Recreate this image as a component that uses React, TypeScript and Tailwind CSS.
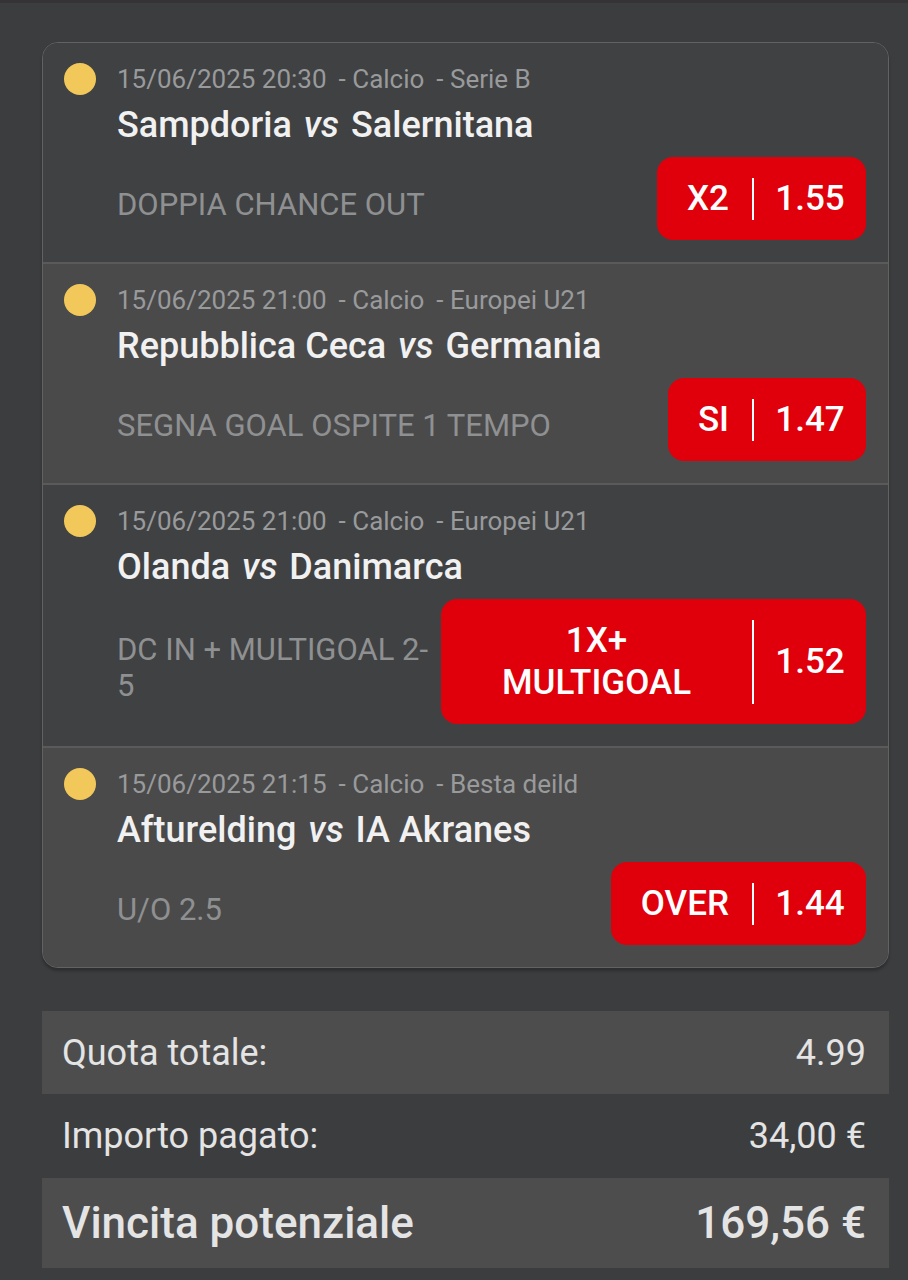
import React from "react";

type Bet = {
  date: string;
  sport: string;
  league: string;
  home: string;
  away: string;
  market: string;
  pick: string;
  odds: string;
  light?: boolean;
  wide?: boolean;
};

const bets: Bet[] = [
  { date: "15/06/2025 20:30", sport: "Calcio", league: "Serie B", home: "Sampdoria", away: "Salernitana", market: "DOPPIA CHANCE OUT", pick: "X2", odds: "1.55" },
  { date: "15/06/2025 21:00", sport: "Calcio", league: "Europei U21", home: "Repubblica Ceca", away: "Germania", market: "SEGNA GOAL OSPITE 1 TEMPO", pick: "SI", odds: "1.47", light: true },
  { date: "15/06/2025 21:00", sport: "Calcio", league: "Europei U21", home: "Olanda", away: "Danimarca", market: "DC IN + MULTIGOAL 2-5", pick: "1X+ MULTIGOAL", odds: "1.52", wide: true },
  { date: "15/06/2025 21:15", sport: "Calcio", league: "Besta deild", home: "Afturelding", away: "IA Akranes", market: "U/O 2.5", pick: "OVER", odds: "1.44", light: true },
];

function BetRow({ bet, last }: { bet: Bet; last: boolean }) {
  return (
    <div
      className={`flex pl-[21px] pr-[22px] pt-5 pb-[22px] ${bet.light ? "bg-[#4a4a4b]" : "bg-[#404143]"} ${last ? "" : "border-b-2 border-[#5a5a5b]"}`}
    >
      {/* status dot */}
      <div className="flex h-8 w-[53px] shrink-0 items-center">
        <span className="h-8 w-8 rounded-full bg-[#f2c85b]" />
      </div>
      <div className="min-w-0 flex-1">
        <p className="text-[26px] leading-8 text-[#999a9b]">
          {bet.date}
          <span className="ml-3">- {bet.sport}</span>
          <span className="ml-3">- {bet.league}</span>
        </p>
        <p className="mt-[10px] text-[36px] font-medium leading-10 text-[#f1f1f1]">
          {bet.home} <i className="mx-[3px]">vs</i> {bet.away}
        </p>
        <div className="mt-3 flex items-center gap-2">
          <p className="min-w-0 flex-1 pt-3 text-[31px] leading-9 text-[#8f9091]">{bet.market}</p>
          {bet.wide ? (
            <div className="flex w-[425px] shrink-0 rounded-2xl bg-[#e0000b] py-[20.5px] text-[35px] font-medium leading-[42px] text-white">
              <span className="flex-1 px-[45px] text-center">{bet.pick}</span>
              <span className="flex w-[114px] items-center justify-center border-l-2 border-white">{bet.odds}</span>
            </div>
          ) : (
            <div className="flex shrink-0 rounded-2xl bg-[#e0000b] py-[20.5px] text-[35px] font-medium leading-[42px] text-white">
              <span className="pl-[30px] pr-[23px]">{bet.pick}</span>
              <span className="flex w-[114px] items-center justify-center border-l-2 border-white">{bet.odds}</span>
            </div>
          )}
        </div>
      </div>
    </div>
  );
}

export default function App() {
  return (
    <div
      className="min-h-screen w-full border-t-[3px] border-[#353336] bg-[#3c3d3f] pb-8 pl-[42px] pr-[19px] pt-[39px]"
      style={{ fontFamily: "Roboto, 'Noto Sans', sans-serif" }}
    >
      {/* Bets card */}
      <div className="overflow-hidden rounded-2xl border border-[#626263] shadow-[0_3px_3px_rgba(0,0,0,0.25)]">
        {bets.map((b, i) => (
          <BetRow key={i} bet={b} last={i === bets.length - 1} />
        ))}
      </div>

      {/* Summary */}
      <div className="mt-[43px] text-[#e4e4e4]">
        <div className="flex h-[83px] items-center justify-between bg-[#4d4d4e] pl-5 pr-[23px] text-[36px]">
          <span>Quota totale:</span>
          <span>4.99</span>
        </div>
        <div className="flex h-[84px] items-center justify-between pl-5 pr-[23px] text-[36px]">
          <span>Importo pagato:</span>
          <span>34,00 €</span>
        </div>
        <div className="flex h-[90px] items-center justify-between bg-[#4d4d4e] pl-5 pr-[23px] text-[44px] font-medium">
          <span>Vincita potenziale</span>
          <span>169,56 €</span>
        </div>
      </div>
    </div>
  );
}
